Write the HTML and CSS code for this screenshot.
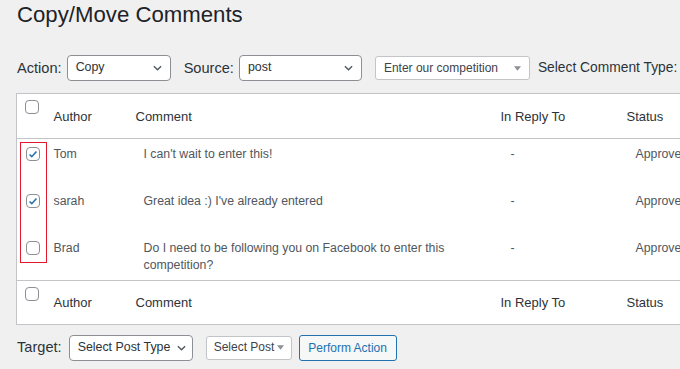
FILE: index.html
```html
<!doctype html>
<html><head>
  <title>Copy/Move Comments</title>
  <meta charset="utf-8">
  <link rel="stylesheet" href="styles.css">
</head><body>
  <div class="wrap">
    <h1>Copy/Move Comments</h1>

    <div class="toolbar top">
      <span class="label">Action:</span>
      <div class="select sel-action"><span>Copy</span>
        <svg class="chev" viewBox="0 0 10 6"><path d="M1 1l4 4 4-4"/></svg>
      </div>
      <span class="label gap">Source:</span>
      <div class="select sel-source"><span>post</span>
        <svg class="chev" viewBox="0 0 10 6"><path d="M1 1l4 4 4-4"/></svg>
      </div>
      <div class="select small sel-post"><span>Enter our competition</span>
        <svg class="tri" viewBox="0 0 8 5"><path d="M0 0h8L4 5z"/></svg>
      </div>
      <span class="label type">Select Comment Type:</span>
    </div>

    <div class="table-box">
      <table class="comments">
        <colgroup>
          <col class="c-cb"><col class="c-author"><col class="c-comment"><col class="c-reply"><col class="c-status">
        </colgroup>
        <thead>
          <tr>
            <th class="cb"><span class="check"></span></th>
            <th>Author</th>
            <th>Comment</th>
            <th>In Reply To</th>
            <th>Status</th>
          </tr>
        </thead>
        <tbody>
          <tr>
            <td class="cb"><span class="check on"><svg viewBox="0 0 14 14"><path d="M3 7.5l2.6 2.6L11 4"/></svg></span></td>
            <td class="author">Tom</td>
            <td class="text">I can't wait to enter this!</td>
            <td class="reply">-</td>
            <td class="status">Approved</td>
          </tr>
          <tr>
            <td class="cb"><span class="check on"><svg viewBox="0 0 14 14"><path d="M3 7.5l2.6 2.6L11 4"/></svg></span></td>
            <td class="author">sarah</td>
            <td class="text">Great idea :) I've already entered</td>
            <td class="reply">-</td>
            <td class="status">Approved</td>
          </tr>
          <tr>
            <td class="cb"><span class="check"></span></td>
            <td class="author">Brad</td>
            <td class="text">Do I need to be following you on Facebook to enter this competition?</td>
            <td class="reply">-</td>
            <td class="status">Approved</td>
          </tr>
        </tbody>
        <tfoot>
          <tr>
            <th class="cb"><span class="check"></span></th>
            <th>Author</th>
            <th>Comment</th>
            <th>In Reply To</th>
            <th>Status</th>
          </tr>
        </tfoot>
      </table>
      <div class="highlight"></div>
    </div>

    <div class="toolbar bottom">
      <span class="label">Target:</span>
      <div class="select sel-type"><span>Select Post Type</span>
        <svg class="chev" viewBox="0 0 10 6"><path d="M1 1l4 4 4-4"/></svg>
      </div>
      <div class="select small sel-target"><span>Select Post</span>
        <svg class="tri" viewBox="0 0 8 5"><path d="M0 0h8L4 5z"/></svg>
      </div>
      <button class="button">Perform Action</button>
    </div>
  </div>
</body></html>
```

FILE: styles.css
```css
html, body {
    overflow: hidden;
}

body {
    margin: 0;
    background: #f0f0f1;
    color: #1d2327;
    font: 14px/1.4 'Liberation Sans', Arial, sans-serif;
}

.wrap {
    padding: 0 0 0 16px;
    width: 740px;
}

h1 {
    margin: 0 0 27px 1px;
    padding-top: 2px;
    font-size: 22.2px;
    font-weight: 400;
    line-height: 26px;
    color: #1d2327;
}

.toolbar {
    display: flex;
    align-items: center;
    height: 26px;
}

.label {
    margin: 0 5px 0 1px;
    font-size: 14.6px;
    color: #2c3338;
    white-space: nowrap;
}

.label.gap {
    margin-left: 13px;
    margin-right: 5px;
}

.label.type {
    font-size: 13.8px;
}

.select {
    box-sizing: border-box;
    display: flex;
    align-items: center;
    justify-content: space-between;
    height: 26px;
    padding: 0 8px 0 8px;
    background: #fff;
    border: 1px solid #8c8f94;
    border-radius: 4px;
    font-size: 12.4px;
    color: #2c3338;
    white-space: nowrap;
}

.select .chev {
    width: 9px;
    height: 6px;
    fill: none;
    stroke: #50575e;
    stroke-width: 1.5;
}

.select .tri {
    width: 7px;
    height: 5px;
    fill: #8c8f94;
}

.select.small {
    height: 24px;
    border-color: #c3c4c7;
    border-radius: 3px;
    font-size: 12px;
    color: #3c434a;
}

.sel-action { width: 104px; }
.sel-source { width: 123px; }
.sel-post { width: 155px; margin: 0 7px 0 13px; }
.sel-type {
    width: 124px;
    margin-left: 2px;
    padding-right: 6px;
}
.sel-target {
    width: 86px;
    height: 26px;
    margin-left: 13px;
    padding: 0 7px 0 7px;
    font-size: 11.6px;
}

.button {
    box-sizing: border-box;
    height: 26px;
    width: 98px;
    margin-left: 7px;
    padding: 0;
    background: #f6f7f7;
    border: 1px solid #2271b1;
    border-radius: 3px;
    color: #2271b1;
    font: 12px 'Liberation Sans', Arial, sans-serif;
}

.table-box {
    position: relative;
    margin-top: 12px;
}

.comments {
    width: 724px;
    table-layout: fixed;
    border-collapse: collapse;
    background: #fff;
    border: 1px solid #c3c4c7;
}

.c-cb { width: 29px; }
.c-author { width: 82px; }
.c-comment { width: 365px; }
.c-reply { width: 126px; }

.comments thead tr {
    height: 45px;
    border-bottom: 1px solid #c3c4c7;
}

.comments tfoot tr {
    height: 44px;
    border-top: 1px solid #c3c4c7;
}

.comments th {
    padding: 3px 8px 0;
    text-align: left;
    font-weight: 400;
    font-size: 13px;
    color: #2c3338;
    vertical-align: middle;
}

.comments th.cb {
    padding: 6px 0 0 8px;
    vertical-align: top;
}

.comments tbody tr {
    height: 47px;
}

.comments td {
    padding: 7px 8px 6px;
    vertical-align: top;
    font-size: 12.3px;
    line-height: 17px;
    color: #50575e;
}

.comments td.cb {
    padding: 8px 0 0 9px;
}

.comments td.text { padding-left: 16px; }
.comments td.reply { padding-left: 18px; }
.comments td.status { padding-left: 17px; }

.check {
    box-sizing: border-box;
    display: block;
    width: 14px;
    height: 14px;
    background: #fff;
    border: 1px solid #8c8f94;
    border-radius: 4px;
}

.check svg {
    display: block;
    width: 12px;
    height: 12px;
    fill: none;
    stroke: #2271b1;
    stroke-width: 1.8;
}

.highlight {
    position: absolute;
    left: 4px;
    top: 49px;
    width: 25px;
    height: 119px;
    border: 1px solid #e3192f;
}

.toolbar.bottom {
    margin-top: 10px;
}
```
